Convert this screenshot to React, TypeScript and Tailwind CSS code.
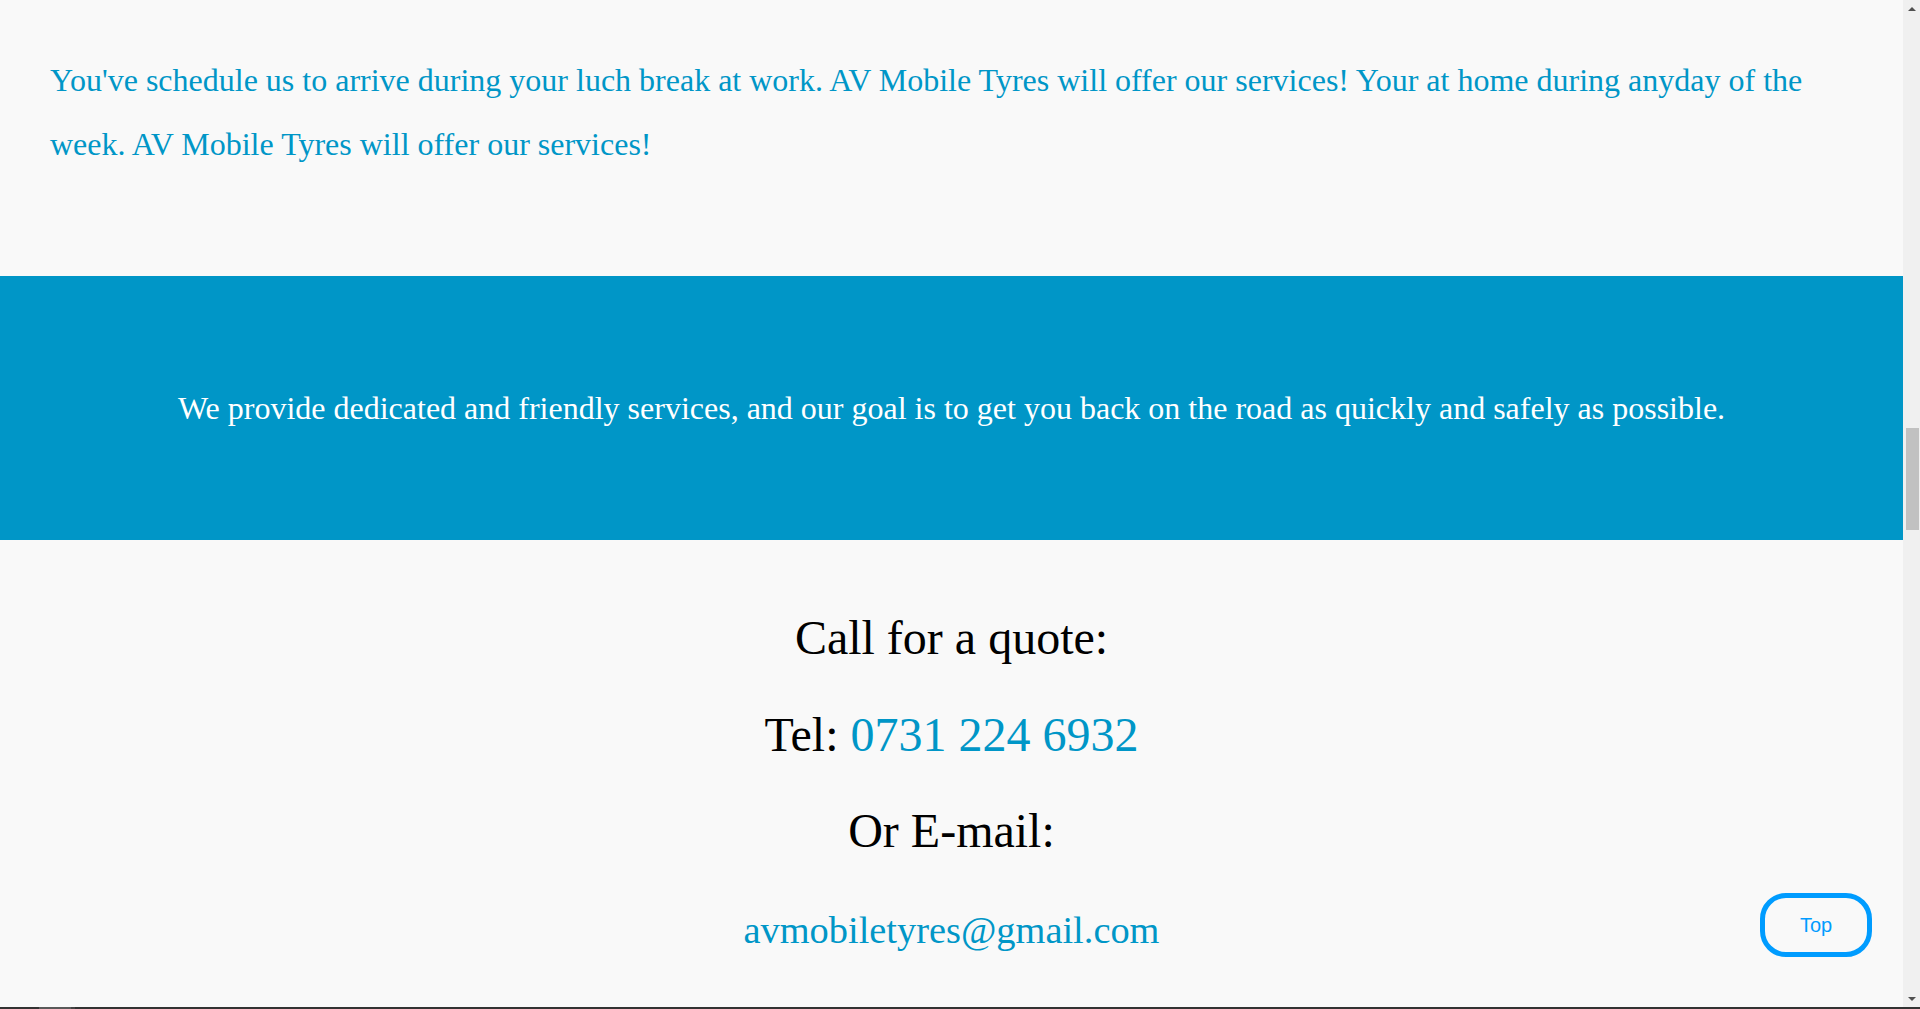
import React from 'react';

const serif = { fontFamily: '"Liberation Serif", "Times New Roman", serif' };

function FakeScrollbar() {
  return (
    <div className="w-[17px] shrink-0 bg-[#f0f0f0] flex flex-col items-center">
      <div className="h-[17px] w-full flex items-center justify-center">
        <div className="w-0 h-0 border-l-[4px] border-r-[4px] border-b-[4px] border-l-transparent border-r-transparent border-b-[#505050]" />
      </div>
      <div className="mt-[411px] ml-[1px] w-[13px] h-[102px] bg-[#c1c1c1]" />
      <div className="flex-1" />
      <div className="h-[17px] w-full flex items-center justify-center">
        <div className="w-0 h-0 border-l-[4px] border-r-[4px] border-t-[4px] border-l-transparent border-r-transparent border-t-[#505050]" />
      </div>
    </div>
  );
}

export default function App() {
  return (
    <div className="w-[1920px] h-[1009px] overflow-hidden flex flex-col bg-[#f9f9f9] relative">
      <div className="flex flex-1 min-h-0">
        <main className="flex-1 min-w-0" style={serif}>
          {/* intro paragraph */}
          <p className="px-[50px] pt-[48px] text-[32px] leading-[64px] text-[#0096c7]">
            You've schedule us to arrive during your luch break at work. AV Mobile Tyres will offer our services! Your at home during anyday of the week. AV Mobile Tyres will offer our services!
          </p>

          {/* blue band */}
          <section className="mt-[100px] h-[264px] bg-[#0096c7] flex items-center justify-center">
            <p className="text-white text-[32px] leading-[36px] text-center">
              We provide dedicated and friendly services, and our goal is to get you back on the road as quickly and safely as possible.
            </p>
          </section>

          {/* contact */}
          <section className="pt-[70px] flex flex-col items-center text-black">
            <h2 className="text-[48px] leading-[56px]">Call for a quote:</h2>
            <p className="mt-[41px] text-[48px] leading-[56px]">
              Tel: <a className="text-[#0096c7]">0731 224 6932</a>
            </p>
            <h2 className="mt-[40px] text-[48px] leading-[56px]">Or E-mail:</h2>
            <a className="mt-[43px] text-[38.4px] leading-[56px] text-[#0096c7]">avmobiletyres@gmail.com</a>
          </section>
        </main>
        <FakeScrollbar />
      </div>

      {/* bottom edge strip */}
      <div className="h-[2px] bg-[#333333] flex shrink-0">
        <div className="ml-[39px] w-[32px] bg-[#5a5a5a]" />
        <div className="w-[4px] bg-[#444444]" />
      </div>

      {/* floating back-to-top button */}
      <button
        className="absolute left-[1760px] top-[893px] w-[112px] h-[64px] rounded-[26px] border-[5px] border-[#009cff] text-[#009cff] text-[20px] bg-transparent flex items-center justify-center"
        style={{ fontFamily: '"Liberation Sans", Arial, sans-serif' }}
      >
        Top
      </button>
    </div>
  );
}
